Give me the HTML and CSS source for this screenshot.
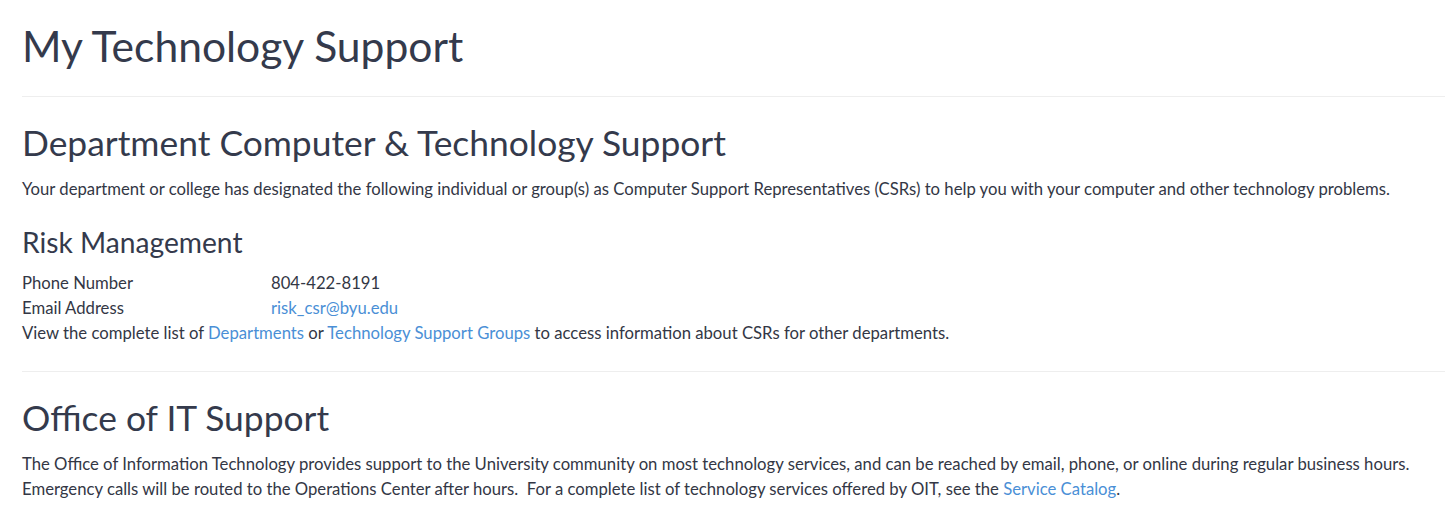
FILE: index.html
```html
<!DOCTYPE html>
<html lang="en">
<head>
    <meta charset="UTF-8">
    <meta name="viewport" content="width=device-width, initial-scale=1.0">
    <title>My Technology Support</title>
    <link rel="stylesheet" href="styles.css">
</head>
<body>
    <div class="container">
        <h1>My Technology Support</h1>
        <hr>
        <section class="support">
            <h2>Department Computer &amp; Technology Support</h2>
            <p>Your department or college has designated the following individual or group(s) as Computer Support Representatives (CSRs) to help you with your computer and other technology problems.</p>
            <h3>Risk Management</h3>
            <div class="contact">
                <span class="label">Phone Number</span>
                <span>804-422-8191</span>
                <span class="label">Email Address</span>
                <a href="#">risk_csr@byu.edu</a>
            </div>
            <p>View the complete list of <a href="#">Departments</a> or <a href="#">Technology Support Groups</a> to access information about CSRs for other departments.</p>
        </section>
        <hr>
        <section class="support">
            <h2>Office of IT Support</h2>
            <p>The Office of Information Technology provides support to the University community on most technology services, and can be reached by email, phone, or online during regular business hours.<br>Emergency calls will be routed to the Operations Center after hours.&nbsp; For a complete list of technology services offered by OIT, see the <a href="#">Service Catalog</a>.</p>
        </section>
    </div>
</body>
</html>
```
FILE: styles.css
```css
body {
    font-family: Lato, "Open Sans", sans-serif;
    font-size: 16.7px;
    line-height: 25px;
    color: #333745;
    margin: 0;
    background-color: white;
}
.container {
    padding: 0 3px 0 22px;
}
h1, h2, h3 {
    font-weight: 400;
    line-height: 1.2;
    color: #343a4c;
    margin: 0;
}
h1 {
    font-size: 42.6px;
    padding-top: 20px;
}
h2 {
    font-size: 35.4px;
    margin-bottom: 12px;
}
h3 {
    font-size: 28.2px;
    margin: 24px 0 12px;
}
hr {
    border: none;
    border-top: 1px solid #eee;
    margin: 25px 0;
}
p {
    margin: 0;
}
a {
    color: #4a8fd6;
    text-decoration: none;
}
.contact {
    display: grid;
    grid-template-columns: 249px 1fr;
}
```
